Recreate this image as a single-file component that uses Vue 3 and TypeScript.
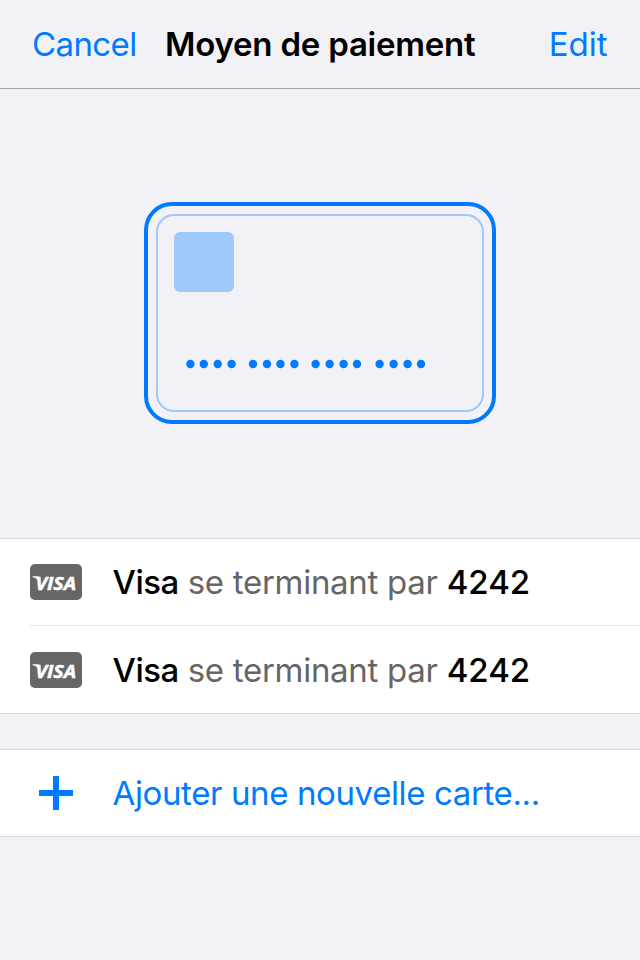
<script setup lang="ts">
interface PaymentCard {
  id: number
  brand: string
  link: string
  last4: string
}

const cards: PaymentCard[] = [
  { id: 1, brand: 'Visa', link: 'se terminant par', last4: '4242' },
  { id: 2, brand: 'Visa', link: 'se terminant par', last4: '4242' },
]

const dots: number[] = [
  46.4, 59.8, 73.7, 87.6,
  109, 123, 136.4, 150.4,
  171.6, 185.6, 199.6, 213,
  235.6, 249.6, 263.6, 277,
]
</script>

<template>
  <div class="screen">
    <header class="bar">
      <a class="action cancel">Cancel</a>
      <h1 class="title">Moyen de paiement</h1>
      <a class="action edit">Edit</a>
    </header>

    <section class="hero">
      <svg class="card-art" width="352" height="222" viewBox="0 0 352 222">
        <rect class="outer" x="2" y="2" width="348" height="218" rx="26" />
        <rect class="inner" x="13" y="13" width="326" height="196" rx="17" />
        <rect class="chip" x="30" y="30" width="60" height="60" rx="6" />
        <circle v-for="x in dots" :key="x" class="dot" :cx="x" cy="162" r="4.2" />
      </svg>
    </section>

    <ul class="list">
      <li v-for="card in cards" :key="card.id" class="row">
        <svg class="brand" width="52" height="36" viewBox="0 0 52 36">
          <rect class="plate" width="52" height="36" rx="5" />
          <path class="flag" d="M2.5 12.3H7.8Q9.2 12.3 9.6 13.9L10.8 19.5Q8.2 14.2 2.5 12.9Z" />
          <text class="logo" x="5.4" y="25.8" textLength="40.8" lengthAdjust="spacingAndGlyphs">VISA</text>
        </svg>
        <div class="label">
          <span class="strong name">{{ card.brand }}</span>
          <span class="muted">{{ card.link }}</span>
          <span class="strong number">{{ card.last4 }}</span>
        </div>
      </li>
    </ul>

    <div class="list add">
      <div class="row">
        <svg class="plus" width="34" height="34" viewBox="0 0 34 34">
          <path d="M14 0h6v14h14v6H20v14h-6V20H0v-6h14z" />
        </svg>
        <span class="label new">Ajouter une nouvelle carte...</span>
      </div>
    </div>
  </div>
</template>

<style>
body {
  background: #f2f1f6;
}
</style>

<style scoped>
.screen {
  width: 640px;
  height: 960px;
  overflow: hidden;
  background: #f2f1f6;
  font-family: Inter, "Liberation Sans", sans-serif;
  font-size: 33px;
  line-height: 40px;
  color: #000;
  white-space: nowrap;
}
.bar {
  display: grid;
  grid-template-columns: 133px 1fr 132px;
  box-sizing: border-box;
  height: 89px;
  padding: 24px 33.5px 0 32px;
  border-bottom: 1px solid #a7a7ab;
}
.action {
  color: #007aff;
}
.cancel {
  letter-spacing: -0.6px;
}
.edit {
  text-align: right;
}
.title {
  margin: 0;
  font-size: 33px;
  font-weight: 600;
  letter-spacing: -0.22px;
}
.hero {
  display: flex;
  justify-content: center;
  box-sizing: border-box;
  height: 449px;
  padding-top: 113px;
}
.outer {
  fill: none;
  stroke: #007aff;
  stroke-width: 4;
}
.inner {
  fill: none;
  stroke: #9fc8fb;
  stroke-width: 2;
}
.chip {
  fill: #9fc8fb;
}
.dot {
  fill: #007aff;
}
.list {
  margin: 0;
  padding: 0;
  list-style: none;
  background: #fff;
  border-top: 1px solid #d9d9dd;
  border-bottom: 1px solid #d9d9dd;
}
.row {
  display: flex;
  align-items: center;
  height: 86px;
  margin-left: 30px;
}
.row + .row {
  height: 87px;
  border-top: 1px solid #e6e6e8;
}
.brand {
  flex: none;
  margin-right: 30.5px;
}
.plate {
  fill: #666;
}
.flag {
  fill: #fff;
}
.logo {
  fill: #fff;
  font-family: "Open Sans", sans-serif;
  font-size: 18.5px;
  font-style: italic;
  font-weight: 700;
  stroke: #fff;
  stroke-width: 0.5;
}
.label {
  display: flex;
  gap: 9px;
}
.strong {
  font-weight: 500;
}
.name {
  letter-spacing: -0.5px;
}
.muted {
  color: #666;
  letter-spacing: -0.29px;
}
.add {
  margin-top: 35px;
}
.plus {
  flex: none;
  margin: 0 39.5px 0 9px;
  fill: #007aff;
}
.new {
  color: #007aff;
  letter-spacing: -0.38px;
}
</style>
